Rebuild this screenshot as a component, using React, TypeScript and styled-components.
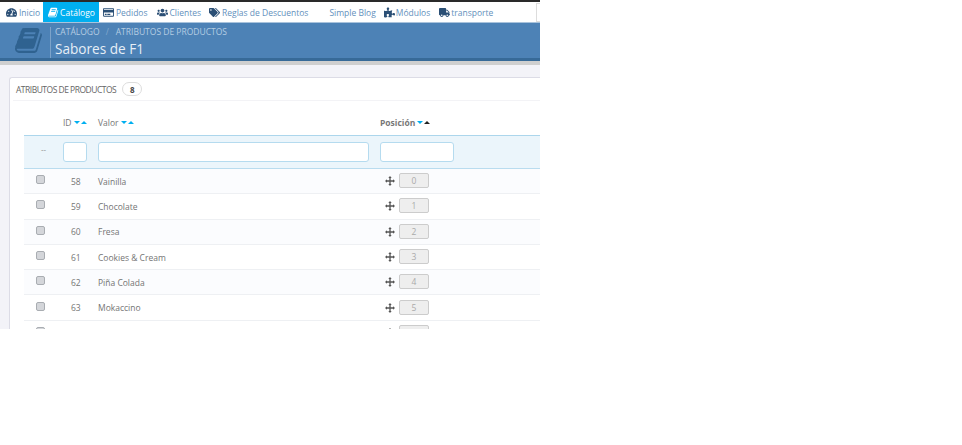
import React from "react";
import styled, { createGlobalStyle } from "styled-components";
import { FaTachometerAlt, FaRegCreditCard, FaUsers, FaTags, FaPuzzlePiece, FaTruck } from "react-icons/fa";

const Global = createGlobalStyle`
  html, body { margin: 0; padding: 0; background: #fff; }
  body { font-family: "Open Sans", "Liberation Sans", sans-serif; }
`;

const Frame = styled.div`
  width: 540px;
  height: 329px;
  overflow: hidden;
  background: #f3f3f8;
  display: flex;
  flex-direction: column;
`;

const TopEdge = styled.div`
  height: 2px;
  background: #2a2a2a;
  flex: none;
`;

const Nav = styled.nav`
  height: 20px;
  flex: none;
  background: #fff;
  display: flex;
  align-items: stretch;
  font-size: 8.5px;
  padding-left: 6px;
  position: relative;
`;

const NavItem = styled.div<{ $active?: boolean; $gap?: number; $icon?: number }>`
  display: flex;
  align-items: center;
  gap: ${(p) => p.$icon ?? 2}px;
  padding: ${(p) => (p.$active ? "0 4px 0 5px" : "0")};
  margin-right: ${(p) => p.$gap ?? 8}px;
  background: ${(p) => (p.$active ? "#00aff0" : "transparent")};
  color: ${(p) => (p.$active ? "#fff" : "#6390bc")};
  white-space: nowrap;
  svg { color: ${(p) => (p.$active ? "#fff" : "#2b4f75")}; width: 11px; height: 11px; flex: none; }
`;

const Search = styled.div`
  position: absolute;
  right: 0;
  top: 1px;
  width: 3px;
  height: 17px;
  border: 1px solid #ddd;
  border-right: none;
`;

const Header = styled.header`
  height: 35px;
  flex: none;
  background: #4d82b6;
  border-top: 1px solid #a9c3dc;
  border-bottom: 3px solid #376a98;
  display: flex;
`;

const HeaderIcon = styled.div`
  width: 50px;
  flex: none;
  display: flex;
  align-items: center;
  padding-left: 15px;
  box-sizing: border-box;
  color: #2f6290;
  svg { width: 29px; height: 29px; }
`;

const HeaderText = styled.div`
  border-left: 1px solid #7da3c9;
  padding-left: 4px;
  margin-top: 4px;
  display: flex;
  flex-direction: column;
`;

const Crumbs = styled.div`
  font-size: 8.5px;
  line-height: 10px;
  color: #b5cde3;
  display: flex;
  gap: 6px;
  text-transform: uppercase;
`;

const CrumbSep = styled.span`
  margin: 0 1px 0 0;
  opacity: 0.5;
`;

const Title = styled.div`
  font-size: 13.6px;
  line-height: 20px;
  margin-top: 2px;
  color: #e6eef6;
`;

const GreyBand = styled.div`
  height: 4px;
  flex: none;
  background: #cfcfcf;
`;

const Content = styled.main`
  padding: 12px 0 0 9px;
  flex: 1;
  min-height: 0;
`;

const Panel = styled.section`
  background: #fff;
  border: 1px solid #dcdce6;
  border-right: none;
  border-radius: 3px 0 0 0;
  padding: 0 0 0 14px;
  height: 300px;
`;

const PanelHead = styled.div`
  height: 22px;
  margin-left: -11px;
  padding-left: 3px;
  display: flex;
  align-items: center;
  gap: 6px;
  border-bottom: 1px solid #f3f3f6;
  font-size: 8.5px;
  letter-spacing: -0.5px;
  color: #666;
  text-transform: uppercase;
`;

const Badge = styled.span`
  width: 20px;
  height: 14px;
  box-sizing: border-box;
  border: 1px solid #ddd;
  border-radius: 8px;
  display: flex;
  align-items: center;
  justify-content: center;
  font-size: 8px;
  font-weight: 700;
  letter-spacing: 0;
  color: #444;
`;

const Row = styled.div`
  display: grid;
  grid-template-columns: 39px 35px 282px 1fr;
  align-items: center;
`;

const HeadRow = styled(Row)`
  height: 34px;
  padding-top: 8px;
  box-sizing: border-box;
  font-size: 8.5px;
  color: #777;
`;

const FilterRow = styled(Row)`
  height: 34px;
  box-sizing: border-box;
  background: #ebf5fb;
  border-top: 1px solid #acd6ec;
  border-bottom: 1px solid #b9dcef;
  color: #888;
  font-size: 8px;
`;

const DataRow = styled(Row)<{ $odd?: boolean }>`
  height: 25.3px;
  box-sizing: border-box;
  background: ${(p) => (p.$odd ? "#fbfcfe" : "#fff")};
  border-bottom: 1px solid #eef0f3;
  font-size: 8.5px;
  color: #747474;
`;

const SortLabel = styled.div<{ $bold?: boolean }>`
  display: flex;
  align-items: center;
  font-weight: ${(p) => (p.$bold ? 700 : 400)};
`;

const Arrows = styled.span`
  display: inline-flex;
  align-items: center;
  gap: 1px;
  margin-left: 2px;
`;

const Tri = styled.i<{ $up?: boolean; $dark?: boolean }>`
  width: 0;
  height: 0;
  border-left: 3px solid transparent;
  border-right: 3px solid transparent;
  ${(p) => (p.$up ? "border-bottom" : "border-top")}: 3px solid ${(p) => (p.$dark ? "#222" : "#00aff0")};
`;

const Dash = styled.div`
  text-align: center;
  margin: -7px 0 0 0;
`;

const NameCell = styled.div`
  padding-top: 0;
`;

const IdCell = styled.div`
  padding-left: 8px;
`;

const Field = styled.div<{ $w: number }>`
  width: ${(p) => p.$w}px;
  height: 20px;
  box-sizing: border-box;
  background: #fff;
  border: 1px solid #b5dbef;
  border-radius: 3px;
`;

const Check = styled.div`
  width: 9px;
  height: 9px;
  box-sizing: border-box;
  margin: -3px 0 0 12px;
  background: #d4d6da;
  border: 1px solid #a9adb2;
  border-radius: 2px;
`;

const PosCell = styled.div`
  display: flex;
  align-items: center;
  gap: 4px;
  padding-left: 5px;
  svg { color: #555; width: 10px; height: 10px; }
`;

const PosBox = styled.div`
  width: 30px;
  height: 15px;
  margin-top: -1px;
  box-sizing: border-box;
  background: #eee;
  border: 1px solid #ccc;
  border-radius: 2px;
  display: flex;
  align-items: center;
  justify-content: center;
  font-size: 8.5px;
  color: #aaa;
`;

const BookIcon = () => (
  <svg viewBox="0 0 1792 1792" fill="currentColor">
    <path d="M1639 478q40 57 18 129l-275 906q-19 64-76.5 107.5t-122.5 43.5h-923q-77 0-148.5-53.5t-99.5-131.5q-24-67-2-127 0-4 3-27t4-37q1-8-3-21.5t-3-19.5q2-11 8-21t16.5-23.5 16.5-23.5q23-38 45-91.5t30-91.5q3-10 .5-30t-.5-28q3-11 17-28t17-23q21-36 42-92t25-90q1-9-2.5-32t.5-28q4-13 22-30.5t22-22.5q19-26 42.5-84.5t27.5-96.5q1-8-3-25.5t-2-26.5q2-8 9-18t18-23 17-21q8-12 16.5-30.5t15-35 16-36 19.5-32 26.5-23.5 36-11.5 47.5 5.5l-1 3q38-9 51-9h761q74 0 114 56t18 130l-274 906q-36 119-71.5 153.5t-128.5 34.5h-869q-27 0-38 15-11 16-1 43 24 70 144 70h923q29 0 56-15.5t35-41.5l300-987q7-22 5-57 38 15 59 43zm-1064 2q-4 13 2 22.5t20 9.5h608q13 0 25.5-9.5t16.5-22.5l21-64q4-13-2-22.5t-20-9.5h-608q-13 0-25.5 9.5t-16.5 22.5zm-83 256q-4 13 2 22.5t20 9.5h608q13 0 25.5-9.5t16.5-22.5l21-64q4-13-2-22.5t-20-9.5h-608q-13 0-25.5 9.5t-16.5 22.5z" />
  </svg>
);

const MoveIcon = () => (
  <svg viewBox="0 0 12 12" fill="currentColor">
    <path d="M6 0 8 2.4H6.8V5.2H9.6V4L12 6 9.6 8V6.8H6.8V9.6H8L6 12 4 9.6H5.2V6.8H2.4V8L0 6 2.4 4V5.2H5.2V2.4H4Z" />
  </svg>
);

const rows = [
  { id: 58, name: "Vainilla" },
  { id: 59, name: "Chocolate" },
  { id: 60, name: "Fresa" },
  { id: 61, name: "Cookies & Cream" },
  { id: 62, name: "Piña Colada" },
  { id: 63, name: "Mokaccino" },
];

export default function App() {
  return (
    <>
      <Global />
      <Frame>
        <TopEdge />
        <Nav>
          <NavItem $gap={3} $icon={2}><FaTachometerAlt />Inicio</NavItem>
          <NavItem $active $gap={4} $icon={1}><BookIcon />Catálogo</NavItem>
          <NavItem $gap={9}><FaRegCreditCard />Pedidos</NavItem>
          <NavItem $gap={8}><FaUsers />Clientes</NavItem>
          <NavItem $gap={21}><FaTags />Reglas de Descuentos</NavItem>
          <NavItem $gap={8}>Simple Blog</NavItem>
          <NavItem $gap={9} $icon={1}><FaPuzzlePiece />Módulos</NavItem>
          <NavItem $icon={1}><FaTruck />transporte</NavItem>
          <Search />
        </Nav>
        <Header>
          <HeaderIcon><BookIcon /></HeaderIcon>
          <HeaderText>
            <Crumbs><span>Catálogo</span><CrumbSep>/</CrumbSep><span>Atributos de productos</span></Crumbs>
            <Title>Sabores de F1</Title>
          </HeaderText>
        </Header>
        <GreyBand />
        <Content>
          <Panel>
            <PanelHead>Atributos de productos <Badge>8</Badge></PanelHead>
            <HeadRow>
              <div />
              <SortLabel>ID<Arrows><Tri /><Tri $up /></Arrows></SortLabel>
              <SortLabel>Valor<Arrows><Tri /><Tri $up /></Arrows></SortLabel>
              <SortLabel $bold>Posición<Arrows><Tri /><Tri $up $dark /></Arrows></SortLabel>
            </HeadRow>
            <FilterRow>
              <Dash>--</Dash>
              <Field $w={24} />
              <Field $w={271} />
              <Field $w={74} />
            </FilterRow>
            {rows.map((r, i) => (
              <DataRow key={r.id} $odd={i % 2 === 0}>
                <Check />
                <IdCell>{r.id}</IdCell>
                <NameCell>{r.name}</NameCell>
                <PosCell><MoveIcon /><PosBox>{i}</PosBox></PosCell>
              </DataRow>
            ))}
            <DataRow>
              <Check />
              <div />
              <div />
              <PosCell><MoveIcon /><PosBox /></PosCell>
            </DataRow>
          </Panel>
        </Content>
      </Frame>
    </>
  );
}
